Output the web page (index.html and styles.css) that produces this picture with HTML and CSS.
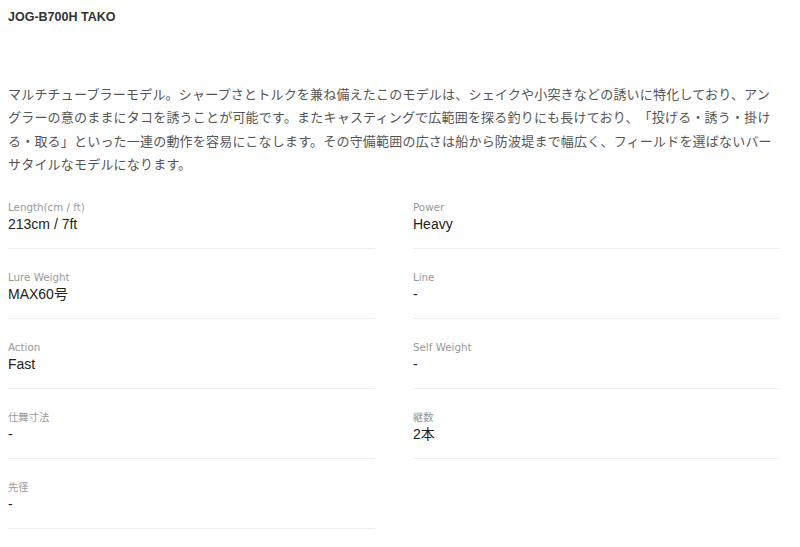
FILE: index.html
```html
<!DOCTYPE html>
<html lang="ja">
<head>
<meta charset="utf-8">
<link rel="stylesheet" href="styles.css">
</head>
<body>
<div class="page">
  <h1 class="title">JOG-B700H TAKO</h1>
  <p class="desc">マルチチューブラーモデル。シャープさとトルクを兼ね備えたこのモデルは、シェイクや小突きなどの誘いに特化しており、アン<br>グラーの意のままにタコを誘うことが可能です。またキャスティングで広範囲を探る釣りにも長けており、「投げる・誘う・掛け<br>る・取る」といった一連の動作を容易にこなします。その守備範囲の広さは船から防波堤まで幅広く、フィールドを選ばないバー<br>サタイルなモデルになります。</p>
  <dl class="specs">
    <div class="spec"><dt class="label">Length(cm / ft)</dt><dd class="value">213cm / 7ft</dd></div>
    <div class="spec"><dt class="label">Power</dt><dd class="value">Heavy</dd></div>
    <div class="spec"><dt class="label">Lure Weight</dt><dd class="value">MAX60号</dd></div>
    <div class="spec"><dt class="label">Line</dt><dd class="value">-</dd></div>
    <div class="spec"><dt class="label">Action</dt><dd class="value">Fast</dd></div>
    <div class="spec"><dt class="label">Self Weight</dt><dd class="value">-</dd></div>
    <div class="spec"><dt class="label">仕舞寸法</dt><dd class="value">-</dd></div>
    <div class="spec"><dt class="label">継数</dt><dd class="value">2本</dd></div>
    <div class="spec"><dt class="label">先径</dt><dd class="value">-</dd></div>
  </dl>
</div>
</body>
</html>
```
FILE: styles.css
```css
html, body {
  margin: 0;
  padding: 0;
  background: #fff;
}
.page {
  padding: 8px 8px 0 8px;
  font-family: "Liberation Sans", "Noto Sans CJK JP", sans-serif;
  color: #333;
}
.title {
  margin: 0;
  font-size: 12.5px;
  line-height: 18px;
  font-weight: bold;
  color: #333;
}
.desc {
  margin: 56px 0 0 0;
  width: 784px;
  white-space: nowrap;
  font-family: "Noto Sans CJK JP", sans-serif;
  font-size: 13px;
  letter-spacing: 0.2px;
  text-spacing-trim: space-all;
  line-height: 23.4px;
  color: #555;
}
.specs {
  margin: 3px 0 0 0;
  display: grid;
  grid-template-columns: 367px 367px;
  column-gap: 38px;
}
.spec {
  padding: 21.5px 0 13.5px 0;
  border-bottom: 1px solid #eee;
}
.label {
  margin: 0;
  font-family: "DejaVu Sans", "Noto Sans CJK JP", sans-serif;
  font-size: 10.3px;
  line-height: 14px;
  color: #999;
}
.value {
  margin: 0;
  font-family: "Liberation Sans", "Noto Sans CJK JP", sans-serif;
  font-size: 14px;
  line-height: 20px;
  color: #222;
}
```
